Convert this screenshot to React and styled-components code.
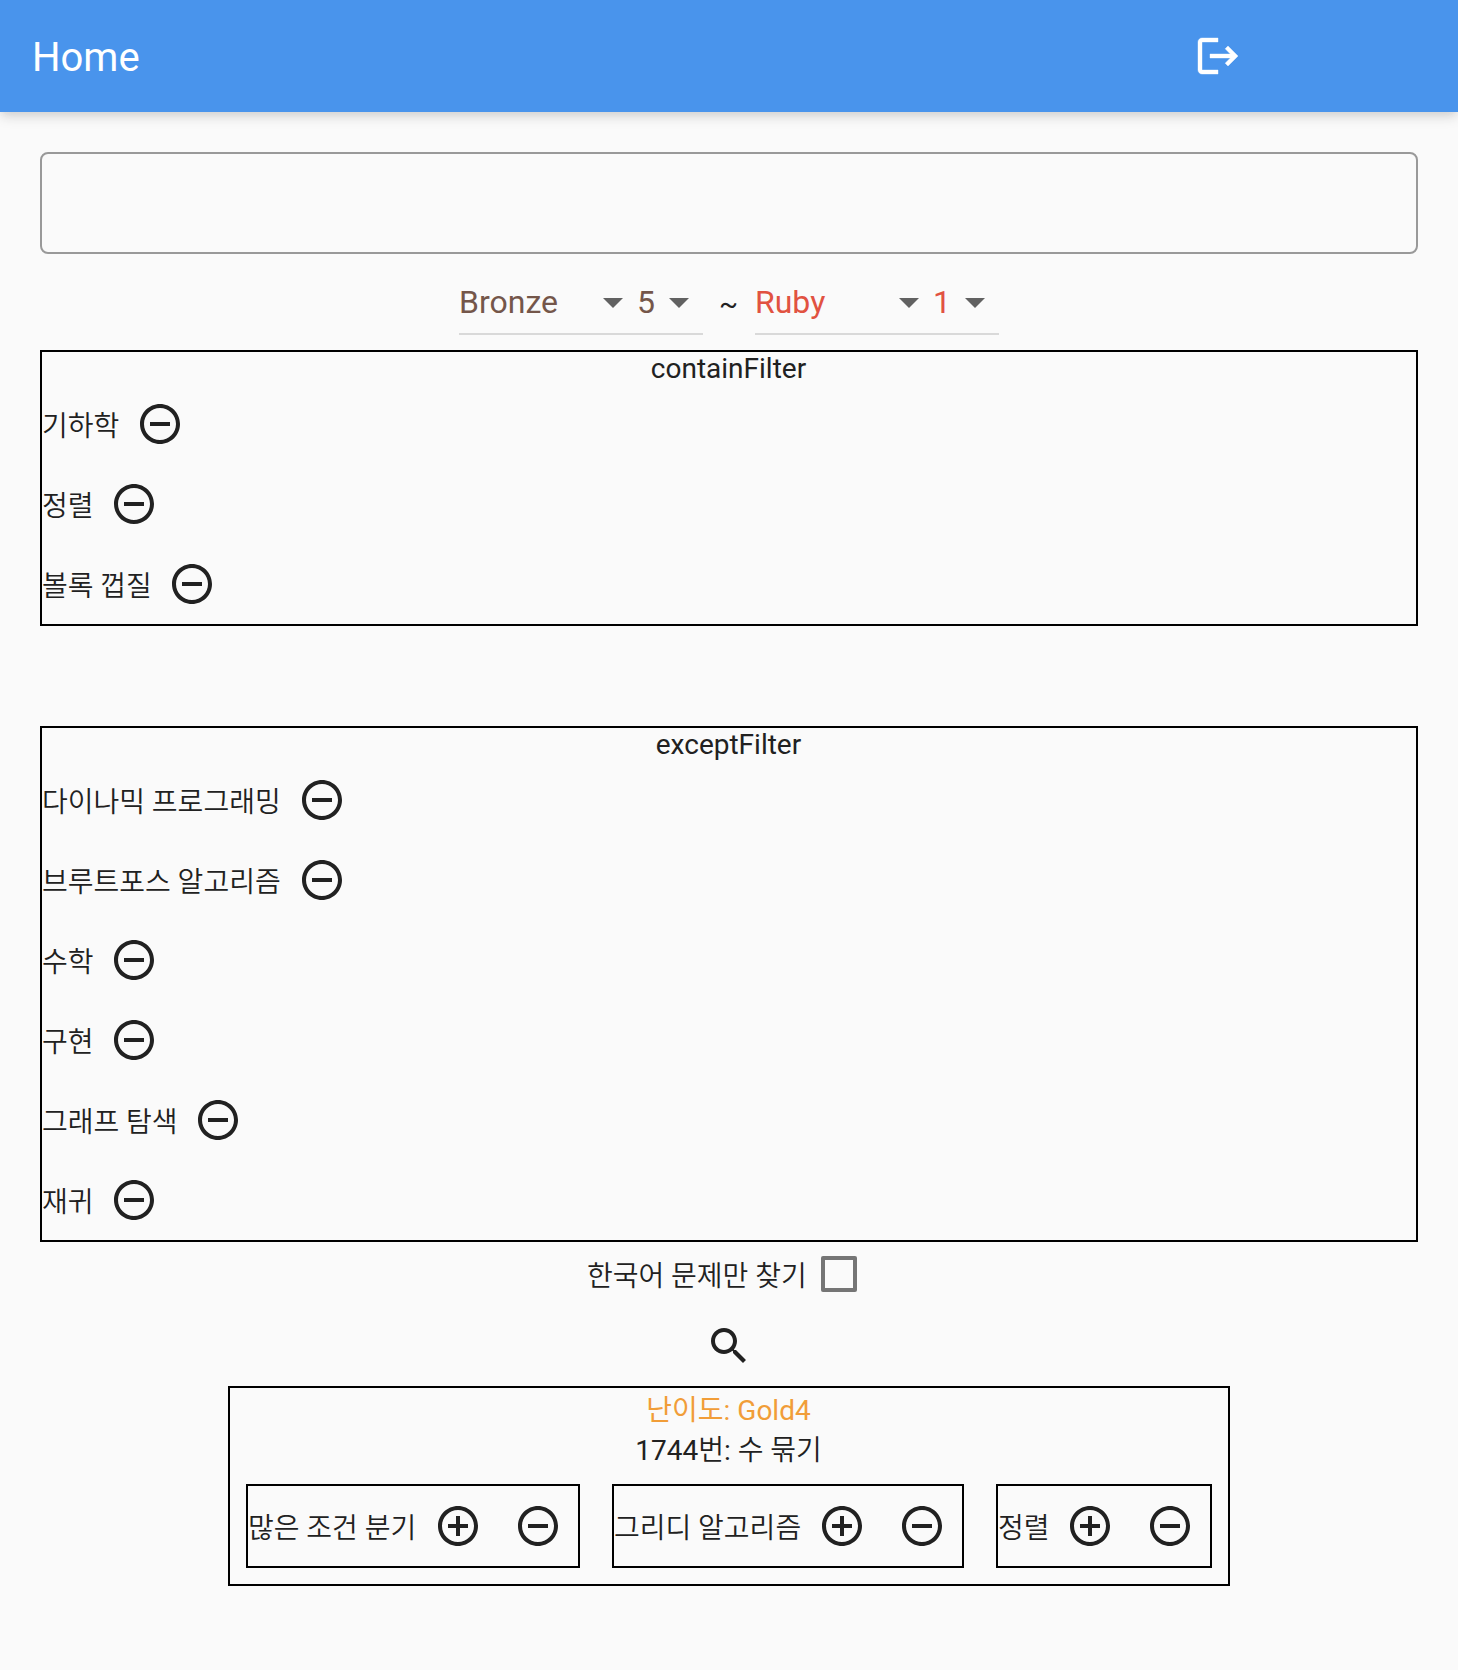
import React from 'react';
import styled, { createGlobalStyle } from 'styled-components';

const GlobalStyle = createGlobalStyle`
  * { box-sizing: border-box; }
  body {
    margin: 0;
    background: #fafafa;
    color: #212121;
    font-family: Roboto, "Noto Sans CJK KR", sans-serif;
    font-size: 28px;
    line-height: 32px;
  }
`;

const Page = styled.div`
  display: flex;
  flex-direction: column;
  min-height: 1670px;
`;

const AppBar = styled.header`
  display: flex;
  align-items: center;
  justify-content: space-between;
  height: 112px;
  padding: 0 200px 0 32px;
  background: #4994ec;
  color: #fff;
  box-shadow: 0 4px 8px -2px rgba(0, 0, 0, 0.07), 0 6px 12px 0 rgba(0, 0, 0, 0.09),
    0 2px 16px 0 rgba(0, 0, 0, 0.03);
`;

const Title = styled.h1`
  margin: 0;
  padding-top: 3px;
  font-size: 40px;
  font-weight: 400;
  line-height: 48px;
`;

const IconButton = styled.button`
  display: flex;
  flex: none;
  align-items: center;
  justify-content: center;
  width: 80px;
  height: 80px;
  padding: 0;
  border: 0;
  background: none;
  color: inherit;
`;

const Glyph = styled.svg`
  display: block;
  flex: none;
  width: 48px;
  height: 48px;
  fill: currentColor;
  stroke: currentColor;
  stroke-width: ${(p) => p.$stroke || 0};
`;

const Content = styled.main`
  display: flex;
  flex-direction: column;
  align-items: center;
  padding: 40px 40px 0;
`;

const SearchField = styled.input`
  width: 100%;
  height: 102px;
  padding: 0 24px;
  border: 2px solid #999;
  border-radius: 8px;
  outline: 0;
  background: transparent;
  font: inherit;
`;

const RangeRow = styled.div`
  display: flex;
  height: 96px;
`;

const TierPicker = styled.div`
  display: flex;
  align-items: center;
  height: 81px;
  padding-top: 17px;
  border-bottom: 2px solid #d9d9d9;
  color: ${(p) => p.$color};
  font-size: 32px;
  line-height: 38px;
`;

const Option = styled.div`
  display: flex;
  align-items: center;
  justify-content: space-between;
  width: ${(p) => p.$width}px;
  white-space: nowrap;

  svg { color: #616161; }
`;

const Tilde = styled.span`
  display: flex;
  align-items: center;
  justify-content: center;
  width: 52px;
  padding: 3px 1px 0 0;
`;

const FilterBox = styled.section`
  width: 100%;
  margin-bottom: ${(p) => p.$gap || 0}px;
  border: 2px solid #000;
`;

const FilterTitle = styled.div`
  height: 32px;
  padding: 1px 1px 0 0;
  text-align: center;
`;

const TagRow = styled.div`
  display: flex;
  align-items: center;
  height: 80px;
`;

const TagName = styled.span`
  width: ${(p) => p.$width}px;
  padding-top: 6px;
  font-weight: 350;
  white-space: nowrap;
`;

const CheckRow = styled.label`
  display: flex;
  align-items: center;
  height: 64px;
`;

const CheckArea = styled.span`
  display: flex;
  align-items: center;
  justify-content: center;
  width: 64px;
`;

const CheckBox = styled.span`
  width: 36px;
  height: 36px;
  border: 4px solid #757575;
  border-radius: 2px;
`;

const Result = styled.section`
  display: flex;
  flex-direction: column;
  border: 2px solid #000;
  padding-bottom: 16px;
`;

const ResultLine = styled.div`
  height: 40px;
  padding: 3px 1px 0 0;
  line-height: 40px;
  text-align: center;
  color: ${(p) => p.$color || 'inherit'};
`;

const Hangul = styled.span`
  font-weight: 350;
`;

const Chips = styled.div`
  display: flex;
  gap: 32px;
  padding: 16px 16px 0;
`;

const Chip = styled.div`
  display: flex;
  align-items: center;
  border: 2px solid #000;
`;

const PATHS = {
  minus:
    'M7 11v2h10v-2H7zm5-9C6.48 2 2 6.48 2 12s4.48 10 10 10 10-4.48 10-10S17.52 2 12 2zm0 18c-4.41 0-8-3.59-8-8s3.59-8 8-8 8 3.59 8 8-3.59 8-8 8z',
  plus:
    'M13 7h-2v4H7v2h4v4h2v-4h4v-2h-4V7zm-1-5C6.48 2 2 6.48 2 12s4.48 10 10 10 10-4.48 10-10S17.52 2 12 2zm0 18c-4.41 0-8-3.59-8-8s3.59-8 8-8 8 3.59 8 8-3.59 8-8 8z',
  arrow: 'M7 10l5 5 5-5z',
  search:
    'M15.5 14h-.79l-.28-.27C15.41 12.59 16 11.11 16 9.5 16 5.91 13.09 3 9.5 3S3 5.91 3 9.5 5.91 16 9.5 16c1.61 0 3.09-.59 4.23-1.57l.27.28v.79l5 4.99L20.49 19l-4.99-5zm-6 0C7.01 14 5 11.99 5 9.5S7.01 5 9.5 5 14 7.01 14 9.5 11.99 14 9.5 14z',
  logout:
    'M4 3h8v2H4v14h8v2H4c-1.1 0-2-.9-2-2V5c0-1.1.9-2 2-2zM17 7l-1.41 1.41L18.17 11H8v2h10.17l-2.58 2.58L17 17l5-5z',
};

const Icon = ({ name, stroke }) => (
  <Glyph viewBox="0 0 24 24" $stroke={stroke}>
    <path d={PATHS[name]} />
  </Glyph>
);

const Picker = ({ tier, level, color }) => (
  <TierPicker $color={color}>
    <Option $width={178}>
      {tier}
      <Icon name="arrow" />
    </Option>
    <Option $width={66}>
      {level}
      <Icon name="arrow" />
    </Option>
  </TierPicker>
);

const Filter = ({ title, tags, gap }) => (
  <FilterBox $gap={gap}>
    <FilterTitle>{title}</FilterTitle>
    {tags.map(([name, width]) => (
      <TagRow key={name}>
        <TagName $width={width}>{name}</TagName>
        <IconButton>
          <Icon name="minus" />
        </IconButton>
      </TagRow>
    ))}
  </FilterBox>
);

const CONTAIN = [['기하학', 78], ['정렬', 52], ['볼록 껍질', 110]];
const EXCEPT = [
  ['다이나믹 프로그래밍', 240],
  ['브루트포스 알고리즘', 240],
  ['수학', 52],
  ['구현', 52],
  ['그래프 탐색', 136],
  ['재귀', 52],
];
const RESULT_TAGS = [['많은 조건 분기', 170], ['그리디 알고리즘', 188], ['정렬', 52]];

export default function App() {
  return (
    <Page>
      <GlobalStyle />
      <AppBar>
        <Title>Home</Title>
        <IconButton>
          <Icon name="logout" stroke={0.2} />
        </IconButton>
      </AppBar>
      <Content>
        <SearchField />
        <RangeRow>
          <Picker tier="Bronze" level="5" color="#74564a" />
          <Tilde>~</Tilde>
          <Picker tier="Ruby" level="1" color="#e15241" />
        </RangeRow>
        <Filter title="containFilter" tags={CONTAIN} gap={100} />
        <Filter title="exceptFilter" tags={EXCEPT} />
        <CheckRow>
          <TagName $width={220}>한국어 문제만 찾기</TagName>
          <CheckArea>
            <CheckBox />
          </CheckArea>
        </CheckRow>
        <IconButton>
          <Icon name="search" />
        </IconButton>
        <Result>
          <ResultLine $color="#f19d38">난이도: Gold4</ResultLine>
          <ResultLine>
            1744<Hangul>번</Hangul>: <Hangul>수 묶기</Hangul>
          </ResultLine>
          <Chips>
            {RESULT_TAGS.map(([name, width]) => (
              <Chip key={name}>
                <TagName $width={width}>{name}</TagName>
                <IconButton>
                  <Icon name="plus" />
                </IconButton>
                <IconButton>
                  <Icon name="minus" />
                </IconButton>
              </Chip>
            ))}
          </Chips>
        </Result>
      </Content>
    </Page>
  );
}
